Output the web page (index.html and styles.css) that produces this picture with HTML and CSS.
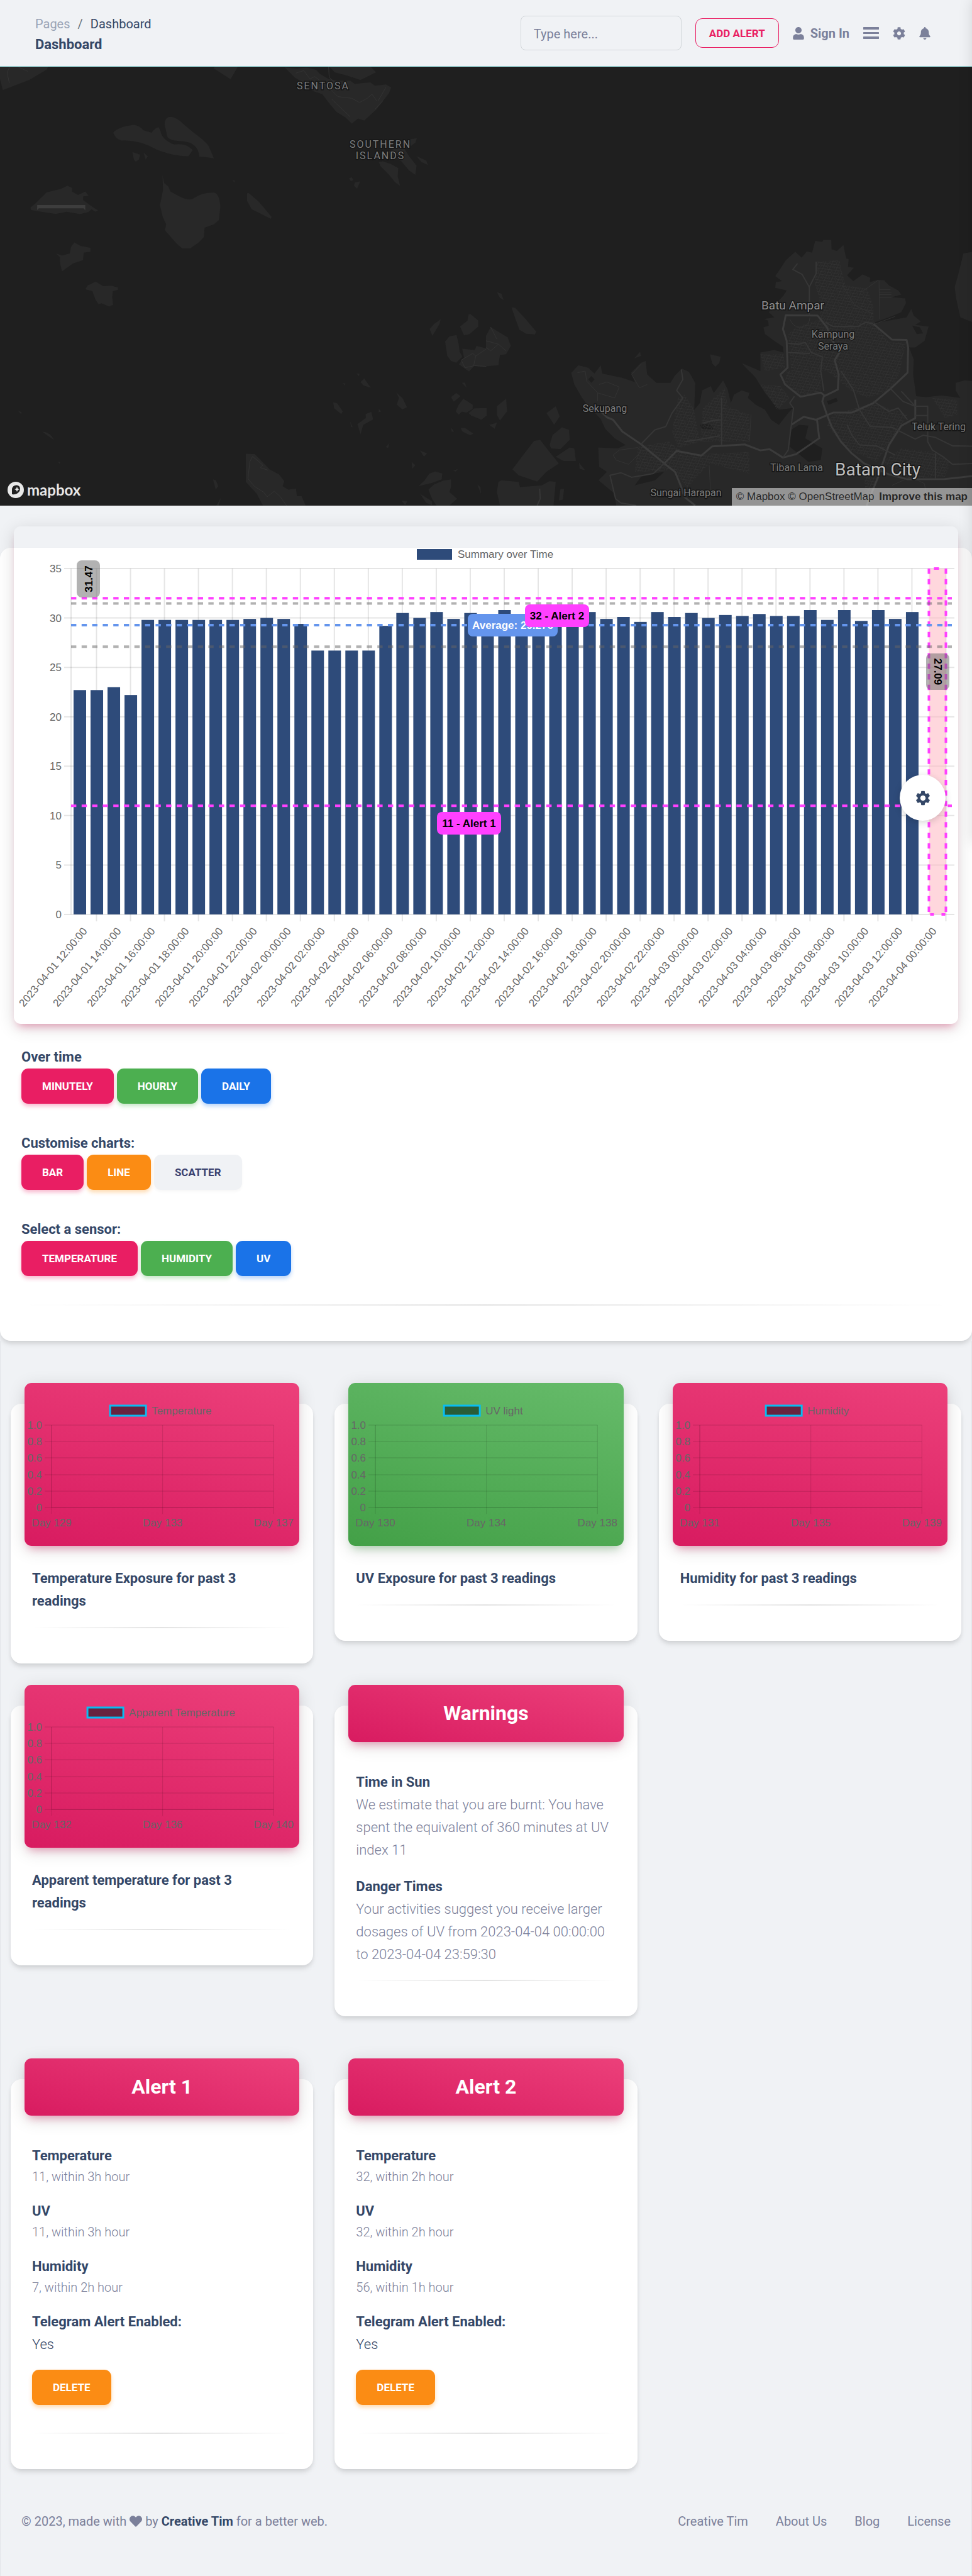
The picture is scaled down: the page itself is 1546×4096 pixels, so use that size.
FILE: index.html
```html
<!DOCTYPE html>
<html lang="en">
<head>
<meta charset="utf-8">
<meta name="viewport" content="width=device-width, initial-scale=1">
<title>Dashboard</title>
<link rel="stylesheet" href="styles.css">
</head>
<body>
<div class="page">
  <header class="topbar">
    <nav class="crumbs" aria-label="Breadcrumb">
      <ol class="crumb-list">
        <li><a class="crumb-link" href="#pages">Pages</a></li>
        <li class="crumb-sep">/</li>
        <li class="crumb-current">Dashboard</li>
      </ol>
      <h1 class="crumb-title">Dashboard</h1>
    </nav>
    <div class="tools">
      <input class="search" type="text" placeholder="Type here..." aria-label="Search">
      <button class="btn-outline" type="button">ADD ALERT</button>
      <a class="tool tool-signin" href="#signin">
        <svg class="icon-tall" viewBox="0 0 448 512" aria-hidden="true"><path d="M224 256c70.700 0 128-57.300 128-128S294.700 0 224 0 96 57.300 96 128s57.300 128 128 128zm89.600 32h-16.700c-22.200 10.200-46.900 16-72.900 16s-50.600-5.800-72.900-16h-16.700C60.200 288 0 348.200 0 422.400V464c0 26.500 21.500 48 48 48h352c26.500 0 48-21.500 48-48v-41.600c0-74.200-60.200-134.400-134.400-134.400z"/></svg>
        Sign In</a>
      <a class="tool" href="#menu" aria-label="Menu">
        <svg class="icon-menu" viewBox="0 0 25 19" aria-hidden="true"><path d="M1 0h23a1 1 0 0 1 0 4H1a1 1 0 0 1 0-4zM1 8h23a1 1 0 0 1 0 3H1a1 1 0 0 1 0-3zM1 15h23a1 1 0 0 1 0 4H1a1 1 0 0 1 0-4z"/></svg></a>
      <a class="tool" href="#settings" aria-label="Settings">
        <svg class="icon-cog" viewBox="0 0 512 512" aria-hidden="true"><path d="M487.400 315.700l-42.600-24.600c4.300-23.200 4.300-47 0-70.200l42.600-24.600c4.900-2.800 7.100-8.600 5.500-14-11.100-35.600-30-67.800-54.700-94.600-3.800-4.100-10-5.100-14.800-2.300L380.800 110c-17.900-15.400-38.500-27.300-60.800-35.100V25.800c0-5.600-3.900-10.500-9.400-11.700-36.700-8.200-74.300-7.800-109.200 0-5.500 1.200-9.400 6.100-9.400 11.700V75c-22.200 7.900-42.800 19.800-60.800 35.100L88.700 85.500c-4.900-2.800-11-1.900-14.800 2.300-24.700 26.700-43.600 58.900-54.700 94.600-1.700 5.400.6 11.200 5.500 14L67.300 221c-4.300 23.200-4.300 47 0 70.200l-42.600 24.600c-4.900 2.800-7.100 8.600-5.500 14 11.100 35.600 30 67.800 54.700 94.600 3.800 4.100 10 5.100 14.800 2.300l42.600-24.600c17.900 15.400 38.500 27.300 60.800 35.100v49.200c0 5.600 3.900 10.500 9.400 11.700 36.700 8.200 74.300 7.800 109.200 0 5.500-1.200 9.400-6.100 9.400-11.700v-49.200c22.200-7.900 42.800-19.800 60.800-35.100l42.600 24.600c4.900 2.800 11 1.900 14.800-2.300 24.700-26.700 43.600-58.900 54.700-94.600 1.500-5.500-.7-11.300-5.600-14.100zM256 336c-44.100 0-80-35.900-80-80s35.900-80 80-80 80 35.900 80 80-35.900 80-80 80z"/></svg></a>
      <a class="tool" href="#notifications" aria-label="Notifications">
        <svg class="icon-tall" viewBox="0 0 448 512" aria-hidden="true"><path d="M224 512c35.320 0 63.970-28.650 63.970-64H160.030c0 35.350 28.650 64 63.970 64zm215.390-149.710c-19.320-20.760-55.470-51.990-55.470-154.290 0-77.700-54.480-139.900-127.940-155.160V32c0-17.670-14.320-32-31.980-32s-31.980 14.330-31.980 32v20.840C118.560 68.100 64.080 130.300 64.080 208c0 102.300-36.150 133.530-55.470 154.290-6 6.450-8.660 14.160-8.610 21.710.11 16.400 12.980 32 32.100 32h383.800c19.120 0 32-15.600 32.100-32 .05-7.550-2.610-15.270-8.610-21.710z"/></svg></a>
    </div>
  </header>

  <section class="map" aria-label="Map">
    <svg class="map-canvas" viewBox="0 0 1546 698" preserveAspectRatio="xMidYMid slice">
      <defs>
        <pattern id="streets" width="22" height="34" patternUnits="userSpaceOnUse" patternTransform="rotate(14)">
          <path class="street" d="M0 5H22M0 22H14M5 0V34M14 5V26M19 14V34"/>
        </pattern>
      </defs>
      <g class="land" transform="translate(0 -106) scale(.493 .2672)">
        <path d="M0 395H156L150 415 95 475 9 536 0 470ZM688 405 695 395H768L744 472Z"/>
        <path d="M918 400 955 408 990 402 1020 415 1032 440 1060 470 1090 480 1130 480 1145 500 1165 495 1195 490 1210 510 1245 502 1262 520 1255 555 1215 650 1175 718 1155 705 1135 735 1115 700 1085 665 1060 610 1040 560 1005 540 985 500 950 460Z"/>
        <path d="M1062 395H1195L1213 430 1163 476 1120 450 1080 430Z"/>
        <path d="M365 790 Q380 755 430 743 Q450 745 462 775L489 790Q500 760 512 757L518 780Q522 830 562 860 600 850 622 893L608 930Q560 930 505 890 450 830 390 836 372 825 365 790Z"/>
        <path d="M531 740Q532 695 550 695 568 695 590 735L625 790Q670 850 676 880L690 943Q670 935 643 932 640 850 590 840 550 840 540 815Z"/>
        <path d="M427 905 452 920 448 950 438 962 432 950ZM463 908 477 930 470 950Z"/>
        <path d="M98 1235 115 1210 150 1145 195 1125 218 1105 232 1118 232 1140 252 1160 275 1140 286 1165 268 1170 268 1190 290 1220 316 1252 308 1260 295 1245 285 1262 258 1274 215 1260 180 1273 140 1262 100 1250Z"/>
        <path d="M524 1040 530 1090 543 1110 550 1140 575 1165Q610 1200 625 1180 650 1145 690 1146 708 1150 711 1230L706 1310 690 1335 660 1355 658 1410 640 1445 613 1478H588L570 1450 532 1370 536 1335 525 1290 516 1220 526 1130Z"/>
        <path d="M797 1150 802 1148 835 1200 876 1290 874 1302 855 1285 812 1245 797 1195Z"/>
        <path d="M181 1508 200 1520 225 1508 229 1470 240 1443 260 1463 292 1475 292 1498 270 1504 268 1548 235 1568 200 1615 194 1568 193 1530Z"/>
        <path d="M1222 965 1235 960 1260 975 1285 1000 1283 1050 1291 1107 1275 1085 1255 1040 1228 990ZM1250 905 1275 880 1305 885 1320 930 1344 985 1340 1040 1320 1015 1295 960 1270 930ZM1320 830 1345 822 1340 850 1325 870ZM1343 928 1375 955 1381 982 1360 965ZM1126 1060 1135 1055 1140 1070 1132 1080ZM1145 1085 1162 1080 1152 1124 1142 1105ZM750 1072 758 1075 756 1085Z"/>
        <path class="pier" d="M120 1220H275V1252L270 1240H125L120 1250Z"/>
        <path class="road-thin" d="M55 395 90 425M30 495 23 430 32 395M955 435 980 420 1000 470 1015 455 1060 520 1090 575 1135 585 1160 610 1185 585 1200 560 1215 600M1060 395 1062 460 1080 490M1070 590 1130 695M1220 600 1245 520M1235 600 1210 650"/>
      </g>
      <g class="land" transform="translate(0 313) scale(.493 .2672)">
        <path d="M275 153 283 130 309 108 333 135 360 132 381 143 380 157 364 165 362 200 365 245 352 256 328 237 318 242 308 215 298 165ZM1386 390 1400 360 1422 332 1418 360 1395 430ZM1484 375 1508 340 1512 302 1518 300 1543 340 1543 375 1515 420 1497 428ZM1436 465 1450 433 1473 426 1480 480 1483 525 1492 555 1472 590 1455 580 1443 550ZM1491 507 1532 515 1537 490 1570 505V615L1530 610 1513 643 1480 600 1497 560Z"/>
        <path d="M1075 826 1088 832 1106 880 1101 896 1078 862ZM1153 955 1180 920 1180 895 1198 882 1204 928 1172 960 1163 1018ZM1278 765 1300 805 1313 855 1298 868 1280 840 1287 800ZM1163 705 1175 685 1197 740 1172 725ZM1455 795 1472 770 1486 790 1464 822ZM1470 880 1480 840 1495 805 1525 840 1525 865 1505 887 1490 882 1480 900ZM1512 890 1530 862 1570 860V905L1553 930 1520 905ZM1486 980 1500 978 1527 1012 1517 1023 1492 1000Z"/>
        <path d="M793 1132 822 1134 870 1225 900 1255 917 1295 912 1325 930 1345 955 1340 958 1385 973 1385 986 1440H848L828 1370 793 1300ZM687 1285 697 1290 704 1325 696 1345ZM698 1440 713 1392 706 1440ZM136 1000Q165 1005 174 1050L150 1020ZM57 875 70 885 68 896ZM187 1180 195 1183 192 1192Z"/>
        <path d="M1350 1325 1370 1290 1385 1250 1405 1238 1427 1250 1425 1285 1395 1305ZM1382 1345 1400 1315 1430 1292 1455 1285 1455 1330 1450 1360 1475 1400 1450 1440H1408L1395 1405ZM1355 1370 1394 1415 1394 1438 1375 1425ZM1355 1112 1378 1130 1368 1150ZM1328 1180 1340 1200 1330 1222ZM1150 655 1160 655 1158 670ZM1105 710 1115 715 1113 725ZM1222 865 1230 880 1222 885ZM1130 940 1138 975 1132 970ZM1245 1092 1257 1068 1252 1098ZM1455 975 1465 1000 1457 1000ZM1490 710 1500 708 1505 738ZM1540 1315 1550 1330 1552 1372ZM1462 1232 1478 1222 1470 1238ZM1295 1412 1315 1414 1307 1438Z"/>
        <path class="road-thin" d="M924 1440 905 1390 885 1355 862 1388 850 1360 820 1325 800 1280 806 1180 815 1148 848 1200 840 1215 865 1230M1568 510 1535 550 1525 535 1488 575 1500 620 1530 608 1568 612M1535 550 1528 608"/>
      </g>
      <g class="land" transform="translate(773 313) scale(.493 .2672)">
        <path d="M35 170 50 180 57 218 45 205ZM82 260 95 265 130 335 162 405 158 422 130 418 108 395 95 330ZM0 430 15 378 70 440 80 490 65 540 45 545 40 605 0 612ZM195 890 225 850 238 910 220 960ZM35 850 65 805 68 880 45 935 35 900ZM10 960 35 948 28 983ZM85 1225 120 1140 155 1055 175 1050 200 1110 235 1190 195 1240 165 1298 105 1260ZM205 1080 215 1020 245 975 268 990 270 1050 240 1105 210 1100ZM225 1150 270 1095 285 1100 290 1175 250 1175ZM40 1300 50 1290 105 1300 110 1330 180 1320 205 1295 225 1300 218 1440H45L35 1360ZM300 1185 320 1230 302 1222ZM722 540 757 555 753 590 740 615 730 595ZM478 565 497 525 500 550ZM240 1342H252L248 1405 235 1410Z"/>
        <path d="M1540-60 1570-70V350L1530 320 1517 210 1512 140 1525 55Z"/>
        <path id="batam" d="M967-20 998-70 1018-35 1035-72 1052-65 1062-135 1085-128 1088-140H1114L1115-85 1132-75 1153-110 1162-30 1170-25 1168 20 1187 25 1165 70 1185 105 1215 65 1240 85 1238 110 1265 97 1285 100 1300 130 1330 160 1340 185 1310 200 1352 208 1355 235 1340 290 1300 320 1240 360 1357 320 1372 270 1380 310 1403 345 1385 365 1428 375 1415 460 1385 500 1365 500 1380 570 1378 660 1388 790 1420 795 1470 785 1530 800 1515 755 1515 710 1545 695 1570 700V1440H420L415 1370 363 1290 390 1240 365 1210 362 1095 425 1100 450 1080 415 1040 385 985 370 925 330 850 310 800 285 720 275 650 298 605 330 620 350 655 370 605 375 655 440 680 480 705 468 650 500 590 515 580 520 660 550 710 595 710 610 665 632 625 655 645 675 710 672 870 690 830 697 755 725 730 735 770 765 695 780 750 790 830 800 780 825 755 850 770 845 800 870 840 900 870 920 930 945 960 975 890 990 860 945 870 900 770 870 680 860 660 838 620 825 592 885 640 885 530 930 515 960 530 958 495 930 460 900 420 895 380 912 370 910 340 897 330 930 320 912 290 935 240 960 190 970 160 933 145 935 110 955 105 933 75 950 30Z"/>
        <path class="water" d="M500 1270 540 1250 575 1240 545 1290 480 1320ZM985 990 1010 960 1040 965 1030 1040 1085 1100 1080 1170 1040 1180 980 1090ZM1100 820 1130 800 1135 820 1105 840ZM330 690 340 670 350 690 340 710ZM1375 370 1400 380 1410 415 1390 420ZM690 960 720 950 735 985 700 990Z"/>
        <path class="blocks" d="M1065-10 1140-20 1150 60 1160 130 1230 150 1250 260 1250 340 1300 470 1355 470 1330 680 1300 760 1230 800 1180 760 1100 640 985 640 975 420 1000 380 1080 330 1075 200 1060 120ZM970 640 1080 620 1080 760 1010 790 965 720ZM885 540 960 540 965 620 900 640ZM885 720 950 730 980 800 940 870ZM620 800 640 780 670 860 690 1060 620 1100 600 1000ZM700 860 770 740 780 850 850 900 850 1060 690 1060ZM490 1090 590 1060 650 1140 850 1120 850 1250 720 1190 650 1330 600 1230 480 1240ZM1120 900 1250 830 1360 900 1330 1000 1260 1180 1160 1100 1100 960ZM1340 1100 1440 1120 1500 1180 1480 1270 1360 1280 1280 1180ZM1440 800 1520 810 1520 900 1480 920ZM1220 1260 1270 1270 1240 1400 1225 1360Z"/>
        <path class="road" d="M1568 1265 1480 1283 1360 1284 1300 1255 1220 1190 1180 1130 1145 1060 1115 970 1100 900 1085 820 1090 790 1135 750 1138 660 1125 575 1140 530 1115 450 1100 380 1070 310 967 308 958 390 970 460 973 620 950 660 965 720 1015 793 1080 768 1095 790M985 960 1025 912 1065 930 1120 887 1180 887 1250 830 1305 745 1360 650 1362 500 1357 455 1310 453 1250 360M370 880 390 915 410 930 440 1000 500 1075 575 1190 610 1240 630 1330 640 1390 675 1440M575 1190 615 1115 695 1143 730 1088 835 1077 885 1112 915 1105 958 1155 1000 1135 1075 1040 1068 930M1228 1440 1265 1270 1300 1080 1340 965 1385 920 1385 810"/>
        <path class="road-mid" d="M958 1155 975 1110 985 960 992 860 980 830 995 790M485 1440 435 1425 418 1400 400 1260 435 1245 470 1272 540 1250 575 1190M1145 640 1185 750 1205 870 1240 970 1310 975 1385 1045 1410 1022 1450 1035 1505 1085 1568 1087M1340 760 1385 850 1425 850 1425 1060 1440 1110 1475 1150 1505 1195 1568 1190M1043 305 1043 140 1065 60 1065-10M1043 140 1020 65 990 35 1005 0M1250 360 1225 350 1200 375 1120 375 1095 350M173 1340 175 1400 165 1440M975 475 1010 480 1030 470 1050 530 1085 555 1080 640 1090 760M975 530 1045 535M630 630 635 690 615 755 635 800 600 890 580 970 545 990 500 1075M760 800 760 1080M700 950 730 935 760 930M640 1060 680 1050 755 1025M1250 820 1300 880 1330 860 1360 930M1305 745 1345 820 1385 850M1385 905H1425M1450 1130 1450 1280M1165 960 1180 1020 1205 1080 1260 1085 1320 1140"/>
        <path class="road-thin" d="M295 650 320 640 325 700 360 770 360 820M365 720 390 705 430 735 415 800 360 770M500 600 470 660 495 740 520 720M410 1140 430 1110 490 1095 500 1120 460 1195 420 1170ZM980 330Q990 380 1015 380 1045 370 1045 320M1255 360 1320 315M1268 100 1270 330M1215 165 1265 100M1270 155H1305M1270 170H1308M1270 185H1308M1270 200H1308M1150 130 1190 250 1250 300M0 460 40 480 15 520 0 500M40 480 65 520M15 378 35 450M720 1200 725 1380M855 900 850 1060M1310 1320 1370 1270 1415 1310 1420 1400"/>
      </g>
      <g class="place">
        <text class="place-area" x="514" y="36">SENTOSA</text>
        <text class="place-area" x="605" y="129">SOUTHERN</text>
        <text class="place-area" x="605" y="147">ISLANDS</text>
        <text class="place-town" x="1261" y="386">Batu Ampar</text>
        <text class="place-village" x="1325" y="431">Kampung</text>
        <text class="place-village" x="1325" y="450">Seraya</text>
        <text class="place-village" x="962" y="549">Sekupang</text>
        <text class="place-village" x="1267" y="643">Tiban Lama</text>
        <text class="place-village" x="1493" y="578">Teluk Tering</text>
        <text class="place-village" x="1091" y="683">Sungai Harapan</text>
        <text class="place-city" x="1396" y="650">Batam City</text>
      </g>
    </svg>
    <a class="map-logo" href="#mapbox">
      <svg class="map-mark" viewBox="0 0 26 26" aria-hidden="true"><circle cx="13" cy="13" r="13" fill="#e8e8e8"/><path d="M7 20V13a7 7 0 0 1 8-7.500 6 6 0 0 1 5 5.500c0 6-6 10-13 9z" fill="#1f1f1f"/><path d="M15 8l1.300 2.900L19 12l-2.700 1.200L15 16l-1.300-2.800L11 12l2.700-1.100z" fill="#e8e8e8"/></svg>
      mapbox</a>
    <div class="map-credit">
      <a href="#mapbox">© Mapbox</a> <a href="#osm">© OpenStreetMap</a> <a class="map-improve" href="#improve">Improve this map</a>
    </div>
  </section>

  <main>
    <section class="panel">
      <div class="chart-frame">
        <svg class="chart" id="summary-chart" viewBox="0 0 1502 791" role="img" aria-label="Summary over Time"></svg>
      </div>
      <div class="panel-body">
        <div class="choice">
          <h2 class="label">Over time</h2>
          <div class="choice-row">
            <button class="btn pink" type="button">MINUTELY</button>
            <button class="btn green" type="button">HOURLY</button>
            <button class="btn blue" type="button">DAILY</button>
          </div>
        </div>
        <div class="choice">
          <h2 class="label">Customise charts:</h2>
          <div class="choice-row">
            <button class="btn pink" type="button">BAR</button>
            <button class="btn orange" type="button">LINE</button>
            <button class="btn light" type="button">SCATTER</button>
          </div>
        </div>
        <div class="choice">
          <h2 class="label">Select a sensor:</h2>
          <div class="choice-row">
            <button class="btn pink" type="button">TEMPERATURE</button>
            <button class="btn green" type="button">HUMIDITY</button>
            <button class="btn blue" type="button">UV</button>
          </div>
        </div>
        <hr class="rule">
      </div>
    </section>

    <div class="cards">
      <article class="card">
        <div class="card-top top-pink"><svg class="mini" viewBox="0 0 437 259" data-name="Temperature" data-legend="135" data-days="129,133,137"></svg></div>
        <div class="card-body">
          <h2 class="label">Temperature Exposure for past 3 readings</h2>
          <hr class="rule">
        </div>
      </article>
      <article class="card">
        <div class="card-top top-green"><svg class="mini" viewBox="0 0 437 259" data-name="UV light" data-legend="151" data-days="130,134,138"></svg></div>
        <div class="card-body">
          <h2 class="label">UV Exposure for past 3 readings</h2>
          <hr class="rule">
        </div>
      </article>
      <article class="card">
        <div class="card-top top-pink"><svg class="mini" viewBox="0 0 437 259" data-name="Humidity" data-legend="147" data-days="131,135,139"></svg></div>
        <div class="card-body">
          <h2 class="label">Humidity for past 3 readings</h2>
          <hr class="rule">
        </div>
      </article>
      <article class="card">
        <div class="card-top top-pink"><svg class="mini" viewBox="0 0 437 259" data-name="Apparent Temperature" data-legend="99" data-days="132,136,140"></svg></div>
        <div class="card-body">
          <h2 class="label">Apparent temperature for past 3 readings</h2>
          <hr class="rule">
        </div>
      </article>
      <article class="card">
        <h2 class="card-top top-pink card-title">Warnings</h2>
        <div class="card-body card-text">
          <div>
            <h3 class="label">Time in Sun</h3>
            <p class="prose">We estimate that you are burnt: You have spent the equivalent of 360 minutes at UV index 11</p>
          </div>
          <div>
            <h3 class="label">Danger Times</h3>
            <p class="prose">Your activities suggest you receive larger dosages of UV from 2023-04-04 00:00:00 to 2023-04-04 23:59:30</p>
          </div>
          <hr class="rule">
        </div>
      </article>
    </div>

    <div class="cards">
      <article class="card">
        <h2 class="card-top top-pink card-title">Alert 1</h2>
        <div class="card-body card-text">
          <div><h3 class="label">Temperature</h3><p class="value">11, within 3h hour</p></div>
          <div><h3 class="label">UV</h3><p class="value">11, within 3h hour</p></div>
          <div><h3 class="label">Humidity</h3><p class="value">7, within 2h hour</p></div>
          <div><h3 class="label">Telegram Alert Enabled:</h3><p class="prose dark">Yes</p></div>
          <div class="action"><button class="btn orange" type="button">DELETE</button></div>
          <hr class="rule">
        </div>
      </article>
      <article class="card">
        <h2 class="card-top top-pink card-title">Alert 2</h2>
        <div class="card-body card-text">
          <div><h3 class="label">Temperature</h3><p class="value">32, within 2h hour</p></div>
          <div><h3 class="label">UV</h3><p class="value">32, within 2h hour</p></div>
          <div><h3 class="label">Humidity</h3><p class="value">56, within 1h hour</p></div>
          <div><h3 class="label">Telegram Alert Enabled:</h3><p class="prose dark">Yes</p></div>
          <div class="action"><button class="btn orange" type="button">DELETE</button></div>
          <hr class="rule">
        </div>
      </article>
    </div>
  </main>

  <footer class="footer">
    <p class="credit">© 2023, made with <svg class="heart" viewBox="0 0 512 512" role="img" aria-label="love"><path d="M462.300 62.600C407.500 15.900 326 24.300 275.700 76.200L256 96.500l-19.700-20.300C186.100 24.300 104.500 15.900 49.700 62.600c-62.800 53.600-66.100 149.800-9.900 207.900l193.500 199.800c12.500 12.900 32.800 12.900 45.300 0l193.500-199.800c56.300-58.100 53-154.300-9.800-207.900z"/></svg> by <a class="credit-link" href="#creative-tim">Creative Tim</a> for a better web.</p>
    <nav class="footer-links" aria-label="Footer">
      <a href="#creative-tim">Creative Tim</a>
      <a href="#about">About Us</a>
      <a href="#blog">Blog</a>
      <a href="#license">License</a>
    </nav>
  </footer>

  <button class="fab" type="button" aria-label="Open configurator">
    <svg class="fab-icon" viewBox="0 0 24 24" aria-hidden="true"><path d="M19.140 12.940c.04-.3.06-.61.06-.94 0-.32-.02-.64-.07-.94l2.030-1.580c.18-.14.23-.41.12-.61l-1.920-3.320c-.12-.22-.37-.29-.59-.22l-2.390.96c-.5-.38-1.030-.7-1.620-.94l-.36-2.540c-.04-.24-.24-.41-.48-.41h-3.840c-.24 0-.43.17-.47.41l-.36 2.540c-.59.24-1.130.57-1.620.94l-2.390-.96c-.22-.08-.47 0-.59.22L2.740 8.870c-.12.21-.08.47.12.61l2.030 1.580c-.05.3-.09.63-.09.94s.02.64.07.94l-2.030 1.580c-.18.14-.23.41-.12.61l1.920 3.320c.12.22.37.29.59.22l2.390-.96c.5.38 1.030.7 1.620.94l.36 2.540c.05.24.24.41.48.41h3.840c.24 0 .44-.17.47-.41l.36-2.540c.59-.24 1.130-.56 1.620-.94l2.390.96c.22.08.47 0 .59-.22l1.920-3.320c.12-.22.07-.47-.12-.61l-2.010-1.580zM12 15.600c-1.980 0-3.600-1.620-3.600-3.600s1.620-3.600 3.600-3.600 3.600 1.620 3.600 3.600-1.620 3.600-3.600 3.600z"/></svg>
  </button>
</div>
<script src="script.js"></script>
</body>
</html>
```
FILE: styles.css
```css
* { box-sizing: border-box; }

body {
  margin: 0;
  background: #f0f2f5;
  color: #344767;
  font-family: Roboto, "Liberation Sans", sans-serif;
  font-size: 22px;
  line-height: 36px;
}

h1, h2, h3, p, ol { margin: 0; padding: 0; }
a { color: inherit; text-decoration: none; }
button, input { font-family: inherit; }

.page { position: relative; overflow: hidden; }

/* Shadow thrown by the closed settings drawer */
.page::after {
  content: "";
  position: absolute;
  top: 0;
  left: 100%;
  width: 40px;
  height: 1340px;
  box-shadow: 0 0 22px rgba(0, 0, 0, .12);
}

/* Top bar */
.topbar {
  display: flex;
  justify-content: space-between;
  align-items: center;
  padding: 16px 66px 16px 56px;
  border-bottom: 1px solid #b4f6f8;
}
.crumbs { padding-top: 7px; }
.crumb-list {
  display: flex;
  gap: 12px;
  list-style: none;
  font-size: 20px;
  line-height: 30px;
}
.crumb-link { color: #9aa3b5; }
.crumb-sep { color: #6c757d; }
.crumb-title { font-size: 22px; line-height: 36px; font-weight: 700; }

.tools { display: flex; align-items: center; gap: 22px; }
.search {
  width: 256px;
  height: 55px;
  padding: 3px 20px 0;
  border: 1px solid #d2d6da;
  border-radius: 8px;
  background: none;
  color: #495057;
  font-size: 20px;
}
.search::placeholder { color: #7b809a; opacity: 1; }
.btn-outline {
  height: 47px;
  padding: 0 21px;
  border: 1px solid #e91e63;
  border-radius: 11px;
  background: none;
  color: #e91e63;
  font-size: 17px;
  font-weight: 700;
}
.tool {
  display: flex;
  align-items: center;
  color: #7b809a;
  font-size: 20px;
  font-weight: 700;
}
.tool-signin { gap: 10px; }
.tool svg { display: block; fill: currentColor; }
.icon-tall { width: 18px; height: 20px; }
.icon-cog { width: 20px; height: 20px; }
.icon-menu { width: 25px; height: 19px; }

/* Map */
.map { position: relative; height: 698px; background: #1f1f1f; }
.map-canvas { display: block; width: 100%; height: 100%; }
.land { fill: #282828; }
.water { fill: #1f1f1f; }
.pier { fill: #3d3d3d; }
.blocks { fill: url(#streets); }
.street { fill: none; stroke: #323232; stroke-width: 2; }
.road, .road-mid, .road-thin { fill: none; vector-effect: non-scaling-stroke; stroke-linejoin: round; }
.road { stroke: #3b3b3b; stroke-width: 3; }
.road-mid { stroke: #363636; stroke-width: 2; }
.road-thin { stroke: #333; stroke-width: 1; }
.place { fill: #7c7c7c; text-anchor: middle; stroke: #161616; stroke-width: 3; paint-order: stroke; }
.place-area { font-size: 16px; letter-spacing: 2px; }
.place-town { font-size: 19px; fill: #8c8c8c; }
.place-village { font-size: 16px; }
.place-city { font-size: 28px; fill: #bcbcbc; }

.map-logo {
  position: absolute;
  left: 12px;
  bottom: 7px;
  display: flex;
  align-items: center;
  gap: 5px;
  color: #e8e8e8;
  font-family: Lato, sans-serif;
  font-size: 24px;
  font-weight: 700;
}
.map-mark { width: 26px; height: 26px; }
.map-credit {
  position: absolute;
  right: 0;
  bottom: 0;
  padding: 0 7px;
  background: rgba(255, 255, 255, .5);
  color: rgba(0, 0, 0, .75);
  font-family: "Liberation Sans", sans-serif;
  font-size: 17px;
  line-height: 28px;
}
.map-improve { margin-left: 3px; font-weight: 700; }

/* Summary panel */
.panel {
  margin-top: 67px;
  border-radius: 17px;
  background: #fff;
  box-shadow: 0 6px 8px -1px rgba(0, 0, 0, .1), 0 3px 6px -1px rgba(0, 0, 0, .06);
}
.chart-frame {
  position: relative;
  top: -34px;
  margin: 0 22px -34px;
  border-radius: 11px;
  box-shadow: 0 6px 28px rgba(0, 0, 0, .14), 0 10px 14px -7px rgba(233, 30, 99, .4);
}
.chart { display: block; width: 100%; height: auto; }
.panel-body { padding: 35px 34px 56px; }
.choice { padding-bottom: 45px; }
.choice-row { display: flex; gap: 5px; }
.label { font-size: 22px; line-height: 36px; font-weight: 700; }

.btn {
  height: 56px;
  padding: 0 33px;
  border: 0;
  border-radius: 11px;
  color: #fff;
  font-size: 17px;
  font-weight: 700;
}
.pink { background: #e91e63; box-shadow: 0 4px 6px rgba(233, 30, 99, .3); }
.green { background: #4caf50; box-shadow: 0 4px 6px rgba(76, 175, 80, .3); }
.blue { background: #1a73e8; box-shadow: 0 4px 6px rgba(26, 115, 232, .3); }
.orange { background: #fb8c14; box-shadow: 0 4px 6px rgba(251, 140, 0, .3); }
.light { background: #f0f2f5; color: #3a416f; box-shadow: 0 3px 4px rgba(0, 0, 0, .03); }

.rule {
  height: 2px;
  margin: 0;
  border: 0;
  background: linear-gradient(90deg, transparent, rgba(0, 0, 0, .11), transparent);
}

/* Cards */
.cards {
  display: grid;
  grid-template-columns: repeat(3, minmax(0, 1fr));
  align-items: start;
  gap: 67px 34px;
  padding: 100px 16px 0;
  border: solid #e3e5e9;
  border-width: 0 1px;
}
.card {
  border-radius: 17px;
  background: #fff;
  box-shadow: 0 6px 8px -1px rgba(0, 0, 0, .1), 0 3px 6px -1px rgba(0, 0, 0, .06);
}
.card-top {
  margin: -33px 22px 0;
  border-radius: 11px;
  box-shadow: 0 6px 28px rgba(0, 0, 0, .14), 0 10px 14px -7px rgba(233, 30, 99, .4);
}
.top-pink { background: linear-gradient(195deg, #ec407a, #d81b60); }
.top-green {
  background: linear-gradient(195deg, #66bb6a, #43a047);
  box-shadow: 0 6px 28px rgba(0, 0, 0, .14), 0 10px 14px -7px rgba(76, 175, 80, .4);
}
.card-title {
  padding: 22px;
  color: #fff;
  font-size: 32px;
  line-height: 47px;
  font-weight: 700;
  text-align: center;
}
.card-body {
  display: flex;
  flex-direction: column;
  gap: 23px;
  padding: 34px 34px 56px;
}
.card-body .label { padding-right: 22px; }
.card-text { gap: 22px; padding-top: 46px; }
.action { padding-bottom: 22px; }
.prose { color: #7b809a; font-size: 22px; line-height: 36px; font-weight: 300; }
.dark { color: #344767; }
.value { color: #7b809a; font-size: 20px; line-height: 30px; font-weight: 300; }
.card-body .btn { display: block; }

/* Charts */
.chart text, .mini text { font-family: "Liberation Sans", sans-serif; font-size: 17px; fill: #666; }
.mini { display: block; width: 100%; height: auto; }
.grid { stroke: rgba(0, 0, 0, .1); stroke-width: 2; fill: none; }
.mini .grid { stroke: rgba(0, 0, 0, .14); stroke-width: 1; }
.grid-thin { stroke: rgba(0, 0, 0, .12); stroke-width: 1; fill: none; }
.bar { fill: #2e4b7a; }
.key { fill: rgba(0, 22, 22, .55); stroke: #08bdf2; stroke-width: 3; }
.note { fill: none; stroke-width: 4; stroke-dasharray: 8.4; }
.note-pink { stroke: #ff40ff; }
.note-blue { stroke: #6495ed; }
.note-gray { stroke: rgba(102, 102, 102, .5); }
.zone { fill: rgba(255, 182, 193, .55); }
.tag-pink { fill: #ff40ff; }
.tag-blue { fill: #6495ed; }
.tag-gray { fill: rgba(102, 102, 102, .5); }
.chart .tag-text { fill: #000; font-weight: 700; text-anchor: middle; }
.chart .tag-light { fill: #fff; }
.tick-end { text-anchor: end; }
.tick-mid { text-anchor: middle; }

/* Footer */
.footer {
  display: flex;
  justify-content: space-between;
  align-items: center;
  padding: 67px 33px 71px;
  border: solid #e3e5e9;
  border-width: 0 1px;
  color: #7b809a;
  font-size: 20px;
  line-height: 32px;
}
.credit-link { color: #344767; font-weight: 700; }
.heart { width: 20px; height: 20px; fill: currentColor; vertical-align: -3px; }
.footer-links { display: flex; gap: 44px; }

.fab {
  position: absolute;
  top: 1232px;
  right: 42px;
  display: flex;
  align-items: center;
  justify-content: center;
  width: 73px;
  height: 73px;
  border: 0;
  border-radius: 50%;
  background: #fff;
  box-shadow: 0 3px 12px rgba(0, 0, 0, .16);
}
.fab-icon { width: 28px; height: 28px; fill: #344767; }
```
FILE: script.js
```js
const NS = 'http://www.w3.org/2000/svg';

function draw(parent, name, attrs, text) {
  const el = document.createElementNS(NS, name);
  for (const key in attrs) el.setAttribute(key, attrs[key]);
  if (text !== undefined) el.textContent = text;
  parent.appendChild(el);
  return el;
}

/* Summary bar chart */
const readings = [
  22.7, 22.7, 23, 22.2, 29.8, 29.8, 29.8, 29.8, 29.8, 29.8, 29.9, 30, 29.9,
  29.4, 26.7, 26.7, 26.7, 26.7, 29.2, 30.5, 30, 30.6, 29.9, 30.5, 29.9, 30.8,
  30, 29.9, 30, 30, 30.6, 29.9, 30.1, 29.6, 30.6, 30.1, 30.5, 30, 30.3, 30.2,
  30.4, 30.2, 30.2, 30.8, 29.8, 30.8, 29.7, 30.8, 29.9, 30.6
];
const left = 91, right = 1496, top0 = 67, bottom = 617, slots = 52;
const step = (right - left) / slots;
const yOf = v => bottom - (v / 35) * (bottom - top0);

function drawSummary(svg) {
  draw(svg, 'rect', { x: 641, y: 36, width: 56, height: 17, class: 'bar' });
  draw(svg, 'text', { x: 706, y: 50 }, 'Summary over Time');

  for (let v = 0; v <= 35; v += 5) {
    draw(svg, 'path', { class: 'grid', d: `M${left - 11} ${yOf(v)}H${right}` });
    draw(svg, 'text', { class: 'tick-end', x: left - 15, y: yOf(v) + 6 }, v);
  }
  draw(svg, 'path', { class: 'grid', d: `M${left} ${top0}V${bottom}` });

  for (let i = 0; i < 26; i++) {
    const x = left + step * (2 * i + 1.5);
    draw(svg, 'path', { class: 'grid', d: `M${x} ${top0}V${bottom + 11}` });
    const hour = 12 + 2 * i;
    const day = 1 + Math.floor(hour / 24);
    const stamp = i === 25
      ? '2023-04-04 00:00:00'
      : `2023-04-0${day} ${String(hour % 24).padStart(2, '0')}:00:00`;
    draw(svg, 'text', {
      class: 'tick-end',
      transform: `translate(${x - 14} ${bottom + 27}) rotate(-50)`
    }, stamp);
  }

  readings.forEach((v, i) => draw(svg, 'rect', {
    class: 'bar', x: left + step * i + 4, y: yOf(v), width: 20, height: bottom - yOf(v)
  }));

  const zoneX = left + step * 50.5;
  draw(svg, 'rect', { class: 'zone', x: zoneX, y: top0, width: step, height: bottom - top0 });
  draw(svg, 'path', { class: 'note note-pink', d: `M${zoneX} ${top0}V${bottom}M${zoneX + step} ${top0}V${bottom}` });
  draw(svg, 'path', { class: 'note note-pink', d: `M${zoneX + 8} ${top0}h8M${zoneX + 2} ${bottom}h6M${zoneX + 20} ${bottom}h6` });

  [[31.47, 'gray'], [27.09, 'gray'], [29.276, 'blue'], [32, 'pink'], [11, 'pink']].forEach(([v, tone]) =>
    draw(svg, 'path', { class: `note note-${tone}`, d: `M${left} ${yOf(v)}H${right - 4}` }));

  const tag = (x, y, w, h, tone, text, turn) => {
    draw(svg, 'rect', { class: `tag-${tone}`, x, y, width: w, height: h, rx: 8 });
    draw(svg, 'text', {
      class: tone === 'blue' ? 'tag-text tag-light' : 'tag-text',
      transform: `translate(${x + w / 2} ${y + h / 2}) rotate(${turn})`,
      y: 6
    }, text);
  };
  tag(100, 54, 37, 59, 'gray', '31.47', -90);
  tag(1451, 202, 37, 58, 'gray', '27.09', 90);
  tag(722, 139, 143, 36, 'blue', 'Average: 29.276', 0);
  tag(813, 124, 102, 36, 'pink', '32 - Alert 2', 0);
  tag(673, 454, 102, 36, 'pink', '11 - Alert 1', 0);
}

/* Small line charts in the cards */
function drawMini(svg) {
  const keyX = Number(svg.dataset.legend);
  draw(svg, 'rect', { class: 'key', x: keyX + 1, y: 36, width: 57, height: 16 });
  draw(svg, 'text', { x: keyX + 67, y: 50 }, svg.dataset.name);
  ['1.0', '0.8', '0.6', '0.4', '0.2', '0'].forEach((label, i) => {
    const y = 67 + Math.round(i * 26.2);
    draw(svg, 'path', { class: 'grid', d: `M32 ${y}H396` });
    draw(svg, 'text', { class: 'tick-end', x: 28, y: y + 6 }, label);
  });
  draw(svg, 'path', { class: 'grid-thin', d: 'M43 198H396M43 67V198' });
  svg.dataset.days.split(',').forEach((day, i) => {
    const x = 43 + i * 176.5;
    draw(svg, 'path', { class: 'grid-thin', d: `M${x} 67V208` });
    draw(svg, 'text', { class: 'tick-mid', x, y: 228 }, `Day ${day}`);
  });
}

drawSummary(document.getElementById('summary-chart'));
document.querySelectorAll('.mini').forEach(drawMini);
```
